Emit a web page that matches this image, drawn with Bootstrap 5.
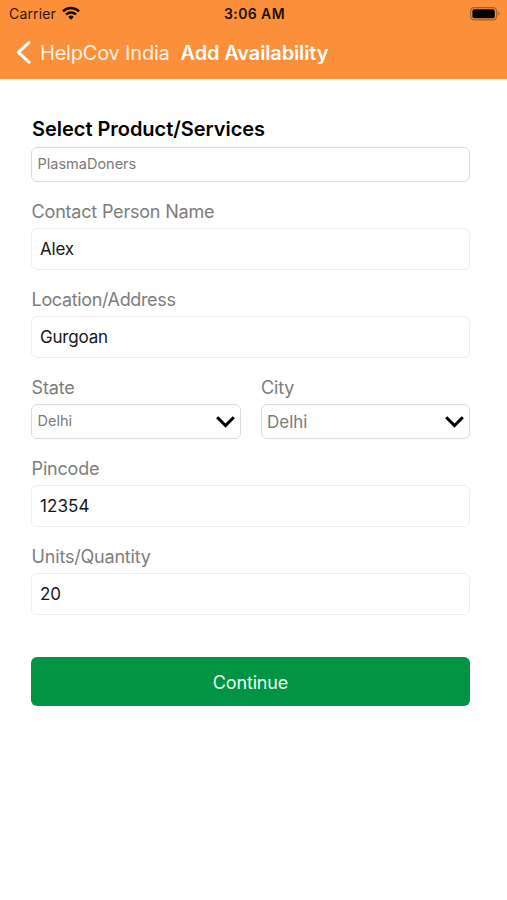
<!DOCTYPE html>
<html lang="en">
<head>
<meta charset="utf-8">
<meta name="viewport" content="width=device-width, initial-scale=1">
<title>Add Availability</title>
<link href="https://cdn.jsdelivr.net/npm/bootstrap@5.3.0/dist/css/bootstrap.min.css" rel="stylesheet">
<style>
body{font-family:Inter,"Liberation Sans",sans-serif;background:#fff;color:#000}
.top{background:#fb8f3a;height:79px}
.status{height:27px;padding:0 7px 0 9px;font-size:14px;line-height:27px;color:#2b1809}
.status .side{flex:1 1 0}
.carrier{letter-spacing:.15px}
.clock{font-weight:600;color:#1c0f04;letter-spacing:.38px}
.wifi{margin-left:6px;margin-top:-2px}
.titlebar{height:52px;padding-left:16px;font-size:20px;line-height:52px;color:#fff}
.back-text{margin-left:9px;color:#fff1e4;letter-spacing:-.2px}
.page-title{margin-left:11px;font-weight:600;letter-spacing:-.14px}
.form-area{padding:39px 37px 0 31px}
.heading{font-size:20px;font-weight:600;line-height:22px;margin-bottom:7px;padding-left:1px;letter-spacing:-.03px}
.field-label{font-size:18px;line-height:18px;margin:21px 0 7px;padding-left:.6px;color:#7d7d7d;letter-spacing:-.2px}
.tight{letter-spacing:-.36px}
.box{display:flex;align-items:center;height:42px;padding:0 8px;font-size:17px;line-height:20px;border:1px solid #efefef;border-radius:6px;color:#161616;background:#fff}
.num{letter-spacing:.1px}
.snug{letter-spacing:-.2px}
.pick{height:35px;padding:0 5px 0 5.5px;border-color:#dcdcdc;color:#7b7b7b}
.pick-sm{font-size:14.5px;line-height:18px}
.pick-sm span{padding-bottom:1px}
.cols{gap:20px}
.go{height:49px;margin-top:42px;padding-top:8px;border:0;border-radius:6px;background:#009444;color:#e9fff1;font-size:18px;line-height:20px;letter-spacing:-.15px}
.go:hover{background:#008039;color:#fff}
</style>
<script src="https://cdn.jsdelivr.net/npm/bootstrap@5.3.0/dist/js/bootstrap.bundle.min.js"></script>
</head>
<body>
<header class="top">
  <div class="status d-flex align-items-center">
    <div class="side d-flex align-items-center">
      <span class="carrier">Carrier</span>
      <svg class="wifi" width="18" height="14" viewBox="0 0 18 14" aria-hidden="true"><g fill="none" stroke="#130a02" stroke-width="2.4"><path d="M1 5.3a11.4 11.4 0 0 1 16 0"/><path d="M4 8.5a7.1 7.1 0 0 1 10 0"/></g><path fill="#130a02" d="M9 13.7 6.2 10.9a4 4 0 0 1 5.6 0z"/></svg>
    </div>
    <span class="clock">3:06 AM</span>
    <div class="side d-flex justify-content-end">
      <svg width="30" height="14" viewBox="0 0 30 14" aria-hidden="true"><rect x=".6" y=".6" width="26" height="12.2" rx="3.6" fill="none" stroke="#a35f28" stroke-width="1.2"/><rect x="2.4" y="2.2" width="22.4" height="9" rx="2" fill="#000"/><path d="M28.2 4.6v4.2q1.4-.7 1.4-2.1t-1.4-2.1" fill="#a35f28"/></svg>
    </div>
  </div>
  <nav class="titlebar d-flex align-items-center">
    <svg width="15" height="24" viewBox="0 0 15 24" fill="none" stroke="#fff" stroke-width="3" stroke-linecap="round" stroke-linejoin="round" aria-hidden="true"><path d="M13 1.6 2.3 11.4 13 21.2"/></svg>
    <span class="back-text">HelpCov India</span>
    <span class="page-title">Add Availability</span>
  </nav>
</header>
<main class="form-area">
  <div class="heading"><span>Select Product/Services</span></div>
  <div class="box pick pick-sm"><span>PlasmaDoners</span></div>
  <div class="field-label"><span>Contact Person Name</span></div>
  <div class="box"><span class="snug">Alex</span></div>
  <div class="field-label tight"><span>Location/Address</span></div>
  <div class="box"><span class="snug">Gurgoan</span></div>
  <div class="cols d-flex">
    <div class="flex-fill w-50">
      <div class="field-label"><span>State</span></div>
      <div class="box pick pick-sm justify-content-between"><span>Delhi</span>
        <svg width="19" height="12" viewBox="0 0 19 12" fill="none" stroke="#000" stroke-width="3" aria-hidden="true"><path d="M1.2 1.3 9.5 9.6l8.3-8.3"/></svg></div>
    </div>
    <div class="flex-fill w-50">
      <div class="field-label"><span>City</span></div>
      <div class="box pick justify-content-between"><span>Delhi</span>
        <svg width="19" height="12" viewBox="0 0 19 12" fill="none" stroke="#000" stroke-width="3" aria-hidden="true"><path d="M1.2 1.3 9.5 9.6l8.3-8.3"/></svg></div>
    </div>
  </div>
  <div class="field-label"><span>Pincode</span></div>
  <div class="box"><span class="num">12354</span></div>
  <div class="field-label"><span>Units/Quantity</span></div>
  <div class="box"><span>20</span></div>
  <button type="button" class="btn go w-100">Continue</button>
</main>
</body>
</html>
